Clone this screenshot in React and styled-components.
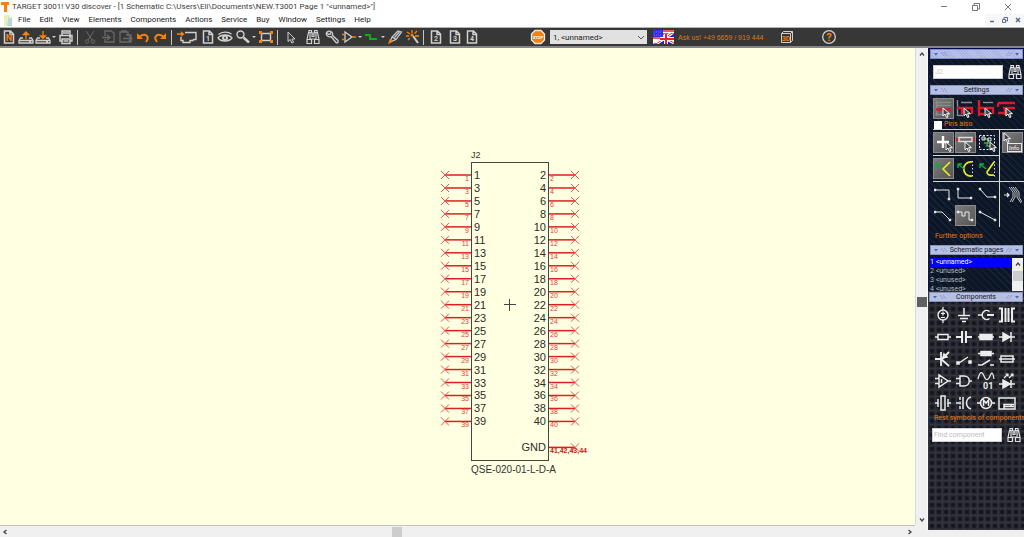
import { useState } from "react";
import styled, { createGlobalStyle } from "styled-components";

const GlobalStyle = createGlobalStyle`
  * {
    box-sizing: border-box;
  }

  body {
    margin: 0;
    background: #f0f0f0;
    font-family: Roboto, "Open Sans", "Liberation Sans", sans-serif;
  }

  button {
    padding: 0;
    border: 0;
    background: none;
    font-family: inherit;
  }
`;

const Window = styled.div`
  display: flex;
  flex-direction: column;
  height: 100vh;
  overflow: hidden;
`;

/* title bar and menu */

const TitleBar = styled.header`
  display: flex;
  align-items: center;
  height: 13px;
  padding-left: 1px;
  background: #fff;
`;

const Title = styled.h1`
  flex: 1;
  margin: 0 0 0 3px;
  color: #3c3c3c;
  font-size: 8px;
  font-weight: 400;
  line-height: 12px;
  white-space: nowrap;
`;

const WindowButtons = styled.div`
  display: flex;
`;

const WindowButton = styled.button`
  display: grid;
  place-items: center;
  width: ${({ $small }) => ($small ? "13px" : "32px")};
  height: ${({ $small }) => ($small ? "12px" : "13px")};
  background: ${({ $small }) => ($small ? "#f6f6f6" : "#fff")};
  color: ${({ $small }) => ($small ? "#5c6f88" : "#777")};
`;

const MenuBar = styled.nav`
  display: flex;
  align-items: center;
  height: 14px;
  padding-left: 4px;
  background: #fff;
`;

const Menus = styled.div`
  display: flex;
  flex: 1;
  gap: 9px;
  margin-left: 6px;
`;

const MenuButton = styled.button`
  color: #222;
  font-size: 8px;
  line-height: 14px;
`;

/* toolbar */

const Toolbar = styled.div`
  display: flex;
  align-items: center;
  height: 21px;
  flex: none;
  border-top: 1px solid #b4b4b4;
  border-bottom: 2px solid #85858a;
  background: #373737;
`;

const Tool = styled.button`
  display: grid;
  place-items: center;
  flex: none;
  width: ${({ $w = 17 }) => $w}px;
  height: 18px;
  color: ${({ $off }) => ($off ? "#6a6a6a" : "#d0d0d0")};
`;

const Divider = styled.span`
  flex: none;
  width: 1px;
  height: 15px;
  margin: 0 2px;
  background: #c4c4c4;
`;

const Info = styled.div`
  display: flex;
  align-items: center;
  margin-left: 49px;
`;

const PageSelect = styled.label`
  display: flex;
  align-items: center;
  width: 97px;
  height: 14px;
  margin: 0 6px 0 3px;
  background: #e1e1e1;

  select {
    width: 100%;
    height: 14px;
    padding: 0 3px;
    border: 0;
    appearance: none;
    background: transparent;
    color: #222;
    font-family: inherit;
    font-size: 8px;
  }

  svg {
    flex: none;
    margin-right: 3px;
  }
`;

const Hotline = styled.a`
  margin: 0 15px 0 4px;
  color: #d8781c;
  font-family: "Liberation Sans", Arial, sans-serif;
  font-size: 7px;
  text-decoration: none;
  white-space: nowrap;
`;

/* work area */

const Main = styled.main`
  display: flex;
  flex: 1;
  min-height: 0;
`;

const Editor = styled.section`
  display: grid;
  grid-template-columns: 1fr 12px;
  grid-template-rows: 1fr 12px;
  flex: 1;
  min-width: 0;
`;

const Sheet = styled.svg`
  width: 100%;
  height: 100%;
  background: #ffffe1;
  font-family: "Liberation Sans", Arial, sans-serif;
`;

const ScrollBar = styled.div`
  display: flex;
  flex-direction: ${({ $vertical }) => ($vertical ? "column" : "row")};
  align-items: center;
  justify-content: space-between;
  padding: ${({ $vertical }) => ($vertical ? "3px 0 2px" : "0 2px")};
  border-left: ${({ $vertical }) => ($vertical ? "1px solid #d8d8d8" : "0")};
  border-top: ${({ $vertical }) => ($vertical ? "0" : "1px solid #c4c4bc")};
  background: #f0f0f0;
  color: #444;

  button {
    display: grid;
    place-items: center;
    color: inherit;
  }
`;

const Track = styled.div`
  display: flex;
  flex: 1;
  flex-direction: ${({ $vertical }) => ($vertical ? "column" : "row")};
`;

const Thumb = styled.div`
  width: 10px;
  height: 10px;
  background: ${({ $dark }) => ($dark ? "#606060" : "#cdcdcd")};
`;

const Spacer = styled.span`
  flex: ${({ $grow }) => $grow};
`;

/* side panel */

const Side = styled.aside`
  display: flex;
  flex-direction: column;
  flex: none;
  width: 97px;
  margin-bottom: 7px;
  border-left: 1px solid #fafafa;
  background: #24252d;
`;

const Upper = styled.div`
  border-top: 1px solid #06064c;
  border-left: 1px solid #10104a;
  background: repeating-linear-gradient(
    45deg,
    #0c1524 0 2px,
    #182436 2px 3px,
    #0e1828 3px 5px
  );
`;

const Lower = styled.div`
  flex: 1;
  padding-top: 1px;
  overflow: hidden;
  background-color: #2a2b33;
  background-image:
    linear-gradient(#33343c 1px, transparent 1px),
    linear-gradient(90deg, #31323a 1px, transparent 1px),
    radial-gradient(circle at 4px 4px, #13141c 1px, transparent 3px);
  background-size: 7px 7px;
`;

const PanelTitle = styled.h2`
  display: flex;
  align-items: center;
  justify-content: space-between;
  height: 10px;
  margin: 0 1px;
  padding: 0 3px;
  border: 1px solid ${({ $active }) => ($active ? "#7f8fd0" : "#8994bb")};
  background: ${({ $active }) =>
    $active
      ? "repeating-linear-gradient(45deg, #a8b4e2 0 1px, #b9c3ea 1px 2px)"
      : "#b6c0e2"};
  color: #16161c;
  font-size: 7px;
  font-weight: 400;
  line-height: 8px;
  white-space: nowrap;
`;

const SearchRow = styled.div`
  display: flex;
  align-items: center;
  gap: 5px;
  padding: 5px 4px;

  input {
    width: 70px;
    height: 14px;
    padding: 0 1px;
    border: 1px solid #ccd;
    border-radius: 0;
    background: #fff;
    color: #c8c8c8;
    font-family: inherit;
    font-size: 7px;
  }

  input::placeholder {
    color: #bdbdbd;
  }

  button {
    display: grid;
    color: #e0e0e0;
  }
`;

const ModeRow = styled.div`
  display: flex;
  padding: 3px 4px 1px;
`;

const Cell = styled.button`
  display: grid;
  place-items: center;
  width: 21px;
  height: 21px;
  border: 1px solid ${({ $on }) => ($on ? "#8b8b8b" : "transparent")};
  background: ${({ $on }) =>
    $on ? "linear-gradient(135deg, #7c7c7c, #555)" : "none"};
  color: #e8e8e8;
`;

const PinsLabel = styled.label`
  display: flex;
  align-items: center;
  gap: 2px;
  height: 9px;
  padding-left: 5px;
  color: #e87a14;
  font-size: 7px;
  line-height: 9px;

  input {
    width: 8px;
    height: 8px;
    margin: 0;
    appearance: none;
    background: #fff;
  }

  input:checked {
    background: #e87a14;
  }
`;

const Options = styled.div`
  display: grid;
  grid-template-columns: 67px 1fr;
  margin-left: 4px;
  border-top: 1px solid #d8d8d8;
`;

const OptionGroup = styled.div`
  display: grid;
  grid-template-columns: repeat(${({ $cols = 3 }) => $cols}, 22px);
  align-content: start;
  height: ${({ $h }) => $h}px;
  padding: ${({ $pad = "2px 0" }) => $pad};
  border-right: ${({ $line }) => ($line ? "1px solid #d8d8d8" : "0")};
  border-bottom: ${({ $rule }) => ($rule ? "1px solid #d8d8d8" : "0")};
`;

const LinkButton = styled.button`
  display: block;
  height: ${({ $h }) => $h}px;
  margin-left: 6px;
  color: #e87a14;
  font-size: 7px;
  line-height: ${({ $h }) => $h}px;
  white-space: nowrap;
`;

const PageList = styled.div`
  display: flex;
  height: 34px;
  margin: 2px 1px 0;
  padding-top: 1px;
  overflow: hidden;
`;

const Pages = styled.div`
  flex: 1;
  overflow: hidden;
`;

const PageItem = styled.button`
  display: block;
  width: 100%;
  height: 9px;
  background: ${({ $on }) => ($on ? "#0000ff" : "none")};
  color: ${({ $on }) => ($on ? "#fff" : "#b0b8c0")};
  font-size: 7px;
  line-height: 9px;
  text-align: left;
`;

const PageScroll = styled.div`
  display: flex;
  flex-direction: column;
  align-items: center;
  gap: 4px;
  width: 11px;
  padding-top: 3px;
  background: #f0f0f0;
  color: #444;
`;

const Symbols = styled.div`
  display: grid;
  grid-template-columns: repeat(4, 1fr);
  padding: 2px 6px 0 4px;
`;

const SymbolButton = styled.button`
  display: grid;
  place-items: center;
  height: 22px;
  color: #ececec;
`;

function Icon({ w = 16, h = 16, children, sw = 1 }) {
  return (
    <svg
      width={w}
      height={h}
      viewBox={`0 0 ${w} ${h}`}
      fill="none"
      stroke="currentColor"
      strokeWidth={sw}
      aria-hidden="true"
    >
      {children}
    </svg>
  );
}

const ORANGE = "#f5820f";
const RED = "#e01828";

const Chevron = ({ turn = 0 }) => (
  <Icon w={6} h={6} sw={1.3}>
    <path d="M1 4.500 3 2l2 2.500" transform={`rotate(${turn} 3 3)`} />
  </Icon>
);

const Binoculars = () => (
  <Icon w={14} h={16} sw={1.2}>
    <path d="M3 3V1.500h2.500V3M8.500 3V1.500H11V3M2.500 3.500h3.500v4H8v-4h3.500l1.500 7v4H8.500v-4.500h-3V14.500H1v-4zM1 10.500h4.500M8.500 10.500H13M6 5h2M4 4v6M10 4v6" />
  </Icon>
);

const PageIcon = ({ n }) => (
  <Icon sw={1.5}>
    <path d="M3.500 2h6l3 3v9h-9zM9 2v3.500h3.500" />
    <text
      x="8"
      y="12"
      fill={n === "N" ? ORANGE : "currentColor"}
      stroke="none"
      fontSize={n === "N" ? 9 : 7}
      fontWeight="700"
      textAnchor="middle"
    >
      {n}
    </text>
  </Icon>
);

const Pointer = ({ x = 0, y = 0 }) => (
  <path
    d="M0 0v8l2-2 1.500 3.500L5 9 3.600 5.700H6.500z"
    transform={`translate(${x} ${y})`}
    fill="#444"
    stroke="#f4f4f4"
    strokeWidth="1"
  />
);

const Caret = () => (
  <Icon w={4} h={4}>
    <path d="M0 1h4L2 3z" fill="currentColor" stroke="none" />
  </Icon>
);

const fileTools = [
  { label: "New", icon: <PageIcon n="N" /> },
  {
    label: "Open",
    icon: (
      <Icon sw={1.3}>
        <path d="M5 9H2.500L1 11.500v2.500h14v-2.500L13.500 9H11M1 11.500h14M11 13h2" />
        <path d="M8 10V4M5.500 5.500 8 3l2.500 2.500z" stroke={ORANGE} fill={ORANGE} />
      </Icon>
    ),
  },
  {
    label: "Save",
    icon: (
      <Icon sw={1.3}>
        <path d="M5 9H2.500L1 11.500v2.500h14v-2.500L13.500 9H11M1 11.500h14M11 13h2" />
        <path d="M8 2v6M5.500 7h5L8 9.500z" stroke={ORANGE} fill={ORANGE} />
      </Icon>
    ),
  },
  { label: "Save options", w: 6, icon: <Caret /> },
  {
    label: "Print",
    w: 18,
    icon: (
      <Icon sw={1.5}>
        <path d="M4 6V2h8v4M4 12H2V6.500h12V12h-2M4 10h8v4.500H4zM5.500 12h5M11 8h2M5 4h6" />
      </Icon>
    ),
  },
];

const editTools = [
  {
    label: "Cut",
    w: 20,
    off: true,
    icon: (
      <Icon>
        <path d="m4 2 6 9M12 2 6 11" />
        <circle cx="5" cy="12.500" r="1.700" />
        <circle cx="11" cy="12.500" r="1.700" />
      </Icon>
    ),
  },
  {
    label: "Copy",
    off: true,
    icon: (
      <Icon sw={1.3}>
        <path d="M4 7V2h6l3 2v9H4v-3M1 8.500h7M6 6l3 2.500L6 11" />
      </Icon>
    ),
  },
  {
    label: "Paste",
    off: true,
    icon: (
      <Icon sw={1.3}>
        <path d="M9 13H2V3h8v3M4 3V2h4v1M5 9.500h8M11 7l3 2.500-3 2.500M5 13h8V6H8" />
      </Icon>
    ),
  },
  {
    label: "Undo",
    icon: (
      <Icon sw={2}>
        <path d="M4 8c7-5 11 0 7 5" stroke={ORANGE} />
        <path d="M2 4v6h6z" fill={ORANGE} stroke="none" />
      </Icon>
    ),
  },
  {
    label: "Redo",
    w: 18,
    icon: (
      <Icon sw={2}>
        <path d="M12 8C5 3 1 8 5 13" stroke={ORANGE} />
        <path d="M14 4v6H8z" fill={ORANGE} stroke="none" />
      </Icon>
    ),
  },
];

const viewTools = [
  {
    label: "Import part",
    w: 25,
    icon: (
      <Icon w={20} sw={1.4}>
        <path d="M8 3.500h11v7h-3M4 8v3.500h2v2h7v-2h3v-1" />
        <path d="M0 5h6M4.500 3.500 6.500 5l-2 1.500z" stroke={ORANGE} fill={ORANGE} />
      </Icon>
    ),
  },
  { label: "Page", icon: <PageIcon n="1" /> },
  {
    label: "View",
    w: 18,
    icon: (
      <Icon sw={1.3}>
        <path d="M1.500 5.500C5 2.500 11 2.500 14.500 5M1 9c3-4 11-4 14 0-3 4-11 4-14 0z" />
        <circle cx="8" cy="8.800" r="2.300" fill="currentColor" />
        <circle cx="8" cy="8.800" r="1" fill="#373737" stroke="none" />
      </Icon>
    ),
  },
  {
    label: "Zoom",
    icon: (
      <Icon sw={1.4}>
        <circle cx="5.500" cy="5.500" r="3.500" />
        <path d="m8.500 8.500 5.500 5" strokeWidth="2.400" />
      </Icon>
    ),
  },
  { label: "Zoom options", w: 6, icon: <Caret /> },
  {
    label: "Fit",
    w: 18,
    icon: (
      <Icon sw={1.4}>
        <path d="M3.500 4.500h9v7h-9z" />
        <path
          d="M1 2h3v3H1zM12 2h3v3h-3zM1 11h3v3H1zM12 11h3v3h-3z"
          fill={ORANGE}
          stroke="none"
        />
      </Icon>
    ),
  },
];

const drawTools = [
  {
    label: "Select",
    w: 22,
    icon: (
      <Icon>
        <path d="M5 3v9.500l2.300-2 1.500 3.500 1.700-.7L9 10h3z" />
      </Icon>
    ),
  },
  { label: "Find", w: 21, icon: <Binoculars /> },
  {
    label: "Properties",
    icon: (
      <Icon sw={1.3}>
        <path d="M7 2.500C4 1 1 4 3 6.500c1 1.500 3 1.500 4 1l5 6c1 1 3-.5 2-2L8.500 6.500C9 5 8.500 3 7 2.500L6.500 5 4.500 5.500 3.500 4" />
      </Icon>
    ),
  },
  {
    label: "Gate",
    icon: (
      <Icon sw={1.3}>
        <path d="M4 3v10l7-5z" />
        <path d="M1 5.500h3M1 10.500h3M11 8h4" stroke={ORANGE} />
      </Icon>
    ),
  },
  { label: "Gate options", w: 5, icon: <Caret /> },
  {
    label: "Wire",
    w: 18,
    icon: (
      <Icon sw={1.8}>
        <path d="M2 6h5v4h7" stroke="#10b010" />
      </Icon>
    ),
  },
  { label: "Wire options", w: 6, icon: <Caret /> },
  {
    label: "Draw",
    w: 18,
    icon: (
      <Icon sw={1.2}>
        <path d="m3 13 2-5 6-6 3.500 1L9 10.500zM5 8l4 2.500M7.500 8.500l5-5.500" />
        <path d="m2 14 1-3 2 1.500z" fill={ORANGE} stroke={ORANGE} />
      </Icon>
    ),
  },
  {
    label: "Wizard",
    icon: (
      <Icon>
        <path d="m8 7 5 7" strokeWidth="2" />
        <path
          d="M7 1v3M2 3l3 2M12 2 9.500 4.500M1 7h3M10 7h4M3 11l2-2"
          stroke={ORANGE}
          strokeWidth="1.300"
        />
        <circle cx="7" cy="6" r="1.500" fill={ORANGE} stroke="none" />
      </Icon>
    ),
  },
];

const pageTools = [
  { label: "Page 2", w: 20, icon: <PageIcon n="2" /> },
  { label: "Page 3", icon: <PageIcon n="3" /> },
  { label: "Page 4", icon: <PageIcon n="4" /> },
];

const toolGroups = [fileTools, editTools, viewTools, drawTools, pageTools];

const menus = [
  "File",
  "Edit",
  "View",
  "Elements",
  "Components",
  "Actions",
  "Service",
  "Buy",
  "Window",
  "Settings",
  "Help",
];

const Flag = () => (
  <svg width="21" height="14" viewBox="0 0 21 14" aria-hidden="true">
    <rect width="21" height="14" fill="#fff" />
    <path d="M10 1h11M10 4h11M0 8h9" stroke="#e82030" strokeWidth="1.500" />
    <rect width="10" height="7" fill="#3030f0" />
    <path d="M1 2h8M1 5h8" stroke="#6f6ff8" strokeDasharray="1 1" />
    <path d="M21 4v10H0z" fill="#2020d8" />
    <path d="M19 3 3 14M10 7l11 6" stroke="#fff" strokeWidth="3" />
    <path d="M19 3 3 14M10 7l11 6" stroke="#e82030" />
    <path d="M13 4v10M7 9h14" stroke="#fff" strokeWidth="4" />
    <path d="M13 4v10M7 9h14" stroke="#e82030" strokeWidth="2" />
  </svg>
);

const Deco = ({ flip }) => (
  <svg width="13" height="6" viewBox="0 0 13 6" aria-hidden="true">
    <g transform={flip ? "translate(13 0) scale(-1 1)" : undefined}>
      <path d="M0 2h4L2 4.500z" fill="#4c62bc" />
      <path d="M7 1l3 4M10 1l3 4" stroke="#8e9bcb" />
    </g>
  </svg>
);

const moveModes = [
  {
    label: "Move with stretch",
    on: true,
    grey: "M3 3.500h14M3 6.500h14M2.500 2v15M3 15.500h13",
    red: "M2 10.500h15",
  },
  {
    label: "Move at right angle",
    grey: "M2.500 1v16M6 3.500h11M3 16.500h5",
    red: "M2 9h15v6M7 9v6",
  },
  { label: "Move bus", grey: "M7 3.500h10", red: "M3 1v16M3 9h14v6M3 15h5" },
  { label: "Move all", grey: "", red: "M1 4h17M6 9h12M8 9v7M1 14h6M1 4v4" },
];

const MoveIcon = ({ grey, red }) => (
  <Icon w={19} h={19}>
    <path d={grey} stroke="#8c8c90" strokeWidth="1.400" />
    <path d={red} stroke={RED} strokeWidth="2.400" />
    <Pointer x={9} y={9} />
  </Icon>
);

const handleTools = [
  {
    label: "Add",
    on: true,
    icon: (
      <Icon w={19} h={19}>
        <path d="M9 3v12M3 9h12" stroke="#fff" strokeWidth="2.400" />
        <Pointer x={12} y={9} />
      </Icon>
    ),
  },
  {
    label: "Resize",
    on: true,
    icon: (
      <Icon w={19} h={19}>
        <path d="M3 4.500h13v4H3z" stroke="#ddd" strokeWidth="1.400" />
        <path d="M1 5v3M18 5v3" stroke={RED} strokeWidth="2" />
        <Pointer x={9} y={9} />
      </Icon>
    ),
  },
  {
    label: "Select area",
    icon: (
      <Icon w={19} h={19}>
        <path d="M1.500 2.500h15v14h-15z" strokeDasharray="2 1.500" />
        <path d="M5 6h5v5M6 10h3v3h4" stroke="#49a34f" strokeWidth="1.400" />
        <path d="M4 4h3v3H4zM10 5h3v3h-3z" />
        <Pointer x={12} y={9} />
      </Icon>
    ),
  },
];

const curveTools = ["m16 3-7 7 7 7", "M16 3C5 2 5 18 16 17", "M16 3 9 13q0 4 7 3"];

const wireTools = [
  { label: "Right then down", d: "M1 5h14v9", dots: [[1, 5], [15, 14]] },
  { label: "Down then right", d: "M2 4v9h13", dots: [[2, 4], [15, 13]] },
  { label: "Diagonal then right", d: "M2 4l7 8h8", dots: [[2, 4], [17, 12]] },
  { label: "Right then diagonal", d: "M1 6h7l8 8", dots: [[1, 6], [16, 14]] },
  {
    label: "Meander",
    on: true,
    d: "M2 6h4v4h3V6h4v8h3",
    dots: [[2, 6], [16, 14]],
  },
  { label: "Straight", d: "M2 6l15 8", dots: [[2, 6], [17, 14]] },
];

const symbols = [
  ["Source", <><circle cx="9" cy="9" r="5" /><path d="M9 1v3M9 14v3M7 7.500h4M9 5.500v4M7 11.500h4" strokeWidth="1.200" /></>],
  ["Ground", <path d="M9 2v7M3 9.500h12M5 12.500h8M7 15.500h4" />],
  ["Connector", <><path d="M1 9h5M12.500 5.500a4.500 4.500 0 1 0 0 7" /><path d="M10 9h7" strokeWidth="2" /></>],
  ["Transformer", <path d="M1 2.500h3v13H1M17 2.500h-3v13h3M7.500 2v14M10.500 2v14" strokeWidth="2" />],
  ["Resistor", <path d="M1 9h3M14 9h3M4 6.500h10v5H4z" />],
  ["Capacitor", <path d="M1 9h6M11 9h6M7 3v12M11 3v12" strokeWidth="2" />],
  ["Filled resistor", <path d="M1 9h3M14 9h3M3 6.500h12v5H3z" fill="currentColor" />],
  ["Diode", <path d="M1 9h16M5 5v8l7-4zM13 4v10" fill="currentColor" />],
  ["Transistor", <><path d="M1 9h6M7 2v14M7 9l8 7M7 10l8-8" strokeWidth="1.800" /><path d="M9 8l1-4 3 3z" fill="currentColor" /></>],
  ["Switch", <><path d="M4 13l9-6" /><path d="M2 12h2v2H2zM14 11h2v2h-2z" fill="currentColor" /></>],
  ["Relay", <><path d="M4 1.500h10v4H4z" fill="currentColor" /><path d="M1 3.500h3M14 3.500h3M1 15h4l8-5M13 15h4" /></>],
  ["Fuse", <path d="M1 9h16M3 6h12v6H3z" />],
  ["Amplifier", <path d="M5 3v12l9-6zM1 6.500h4M1 11.500h4M14 9h3M7.500 7v4" />],
  ["Gate", <path d="M5 4h4c7 0 7 10 0 10H5zM1 6.500h4M1 11.500h4M14 9h3" />],
  ["Simulation", <><path d="M1 7C3-1 5-1 7 4s4 5 6 0 3-3 4 3" strokeWidth="1.200" /><text x="6" y="17" fill="currentColor" stroke="none" fontSize="9" fontWeight="700">01</text></>],
  ["LED", <><path d="M1 12h16M5 8v8l7-4zM13 8v8" fill="currentColor" /><path d="M6 6l4-4M7.500 2H10v2.500M11 6l4-4M12.500 2H15v2.500" strokeWidth="1.200" /></>],
  ["Crystal", <path d="M1 9h3M14 9h3M7 2h4v14H7zM4 5v8M14 5v8" strokeWidth="1.500" />],
  ["Coupler", <path d="M1 9h3M5 3v3M5 7.500v3M5 12v3M8 3v12M16 3c-6 2-6 10 0 12" />],
  ["Motor", <><circle cx="9" cy="9" r="5.500" /><path d="M0 9h3M15 9h3M6.500 12V6L9 9l2.500-3v6" /></>],
  ["Frame", <path d="M1 4h16v11H1zM6 12.500h10M6 15v-4.500h10M13 10v3" strokeWidth="1.500" />],
];

const ROW = 12.97;

function Pin({ y, left, n }) {
  const tip = left ? 445 : 575;
  const edge = left ? 471 : 549;
  const ground = n === "GND";
  return (
    <g>
      <path d={`M${tip} ${y}H${edge}`} stroke="#dc2020" strokeWidth="1.500" />
      <path
        d={`M${tip - 4} ${y - 4}l8 8M${tip - 4} ${y + 4}l8-8`}
        stroke="#e85050"
      />
      <text
        x={left ? 469 : 550}
        y={y + 6}
        textAnchor={left ? "end" : "start"}
        fontSize="7"
        fontWeight={ground ? 700 : 400}
        fill={ground ? "#d01818" : "#e34040"}
      >
        {ground ? "41,42,43,44" : n}
      </text>
      <text
        x={left ? 474 : 546}
        y={y + 4}
        textAnchor={left ? "start" : "end"}
        fontSize="11"
        fill="#2c2c2c"
      >
        {n}
      </text>
    </g>
  );
}

function Schematic() {
  const rows = Array.from({ length: 20 }, (_, i) => i);
  return (
    <Sheet role="img" aria-label="Connector J2">
      <text x="471" y="110" fontSize="9" fill="#333">
        J2
      </text>
      <rect x="471.500" y="114.500" width="77" height="298" fill="none" stroke="#444" />
      {rows.map((i) => (
        <Pin key={i} left y={127 + i * ROW} n={i * 2 + 1} />
      ))}
      {rows.map((i) => (
        <Pin key={i} y={127 + i * ROW} n={i * 2 + 2} />
      ))}
      <Pin y={127 + 21 * ROW} n="GND" />
      <path d="M504 256.500h12M509.500 251v12" stroke="#444" />
      <text x="471" y="425" fontSize="10" fill="#333">
        QSE-020-01-L-D-A
      </text>
    </Sheet>
  );
}

function PanelHeader({ children, active }) {
  return (
    <PanelTitle $active={active}>
      <Deco />
      {children}
      <Deco flip />
    </PanelTitle>
  );
}

function SidePanel() {
  const [page, setPage] = useState(1);
  return (
    <Side>
      <Upper>
        <PanelHeader active />
        <SearchRow>
          <input aria-label="Name" defaultValue="J2" />
          <button aria-label="Search name">
            <Binoculars />
          </button>
        </SearchRow>
        <PanelHeader>Settings</PanelHeader>
        <ModeRow>
          {moveModes.map((m) => (
            <Cell key={m.label} aria-label={m.label} $on={m.on}>
              <MoveIcon grey={m.grey} red={m.red} />
            </Cell>
          ))}
        </ModeRow>
        <PinsLabel>
          <input type="checkbox" />
          Pins also
        </PinsLabel>
        <Options>
          <OptionGroup $h={26} $line $rule>
            {handleTools.map((t) => (
              <Cell key={t.label} aria-label={t.label} $on={t.on}>
                {t.icon}
              </Cell>
            ))}
          </OptionGroup>
          <OptionGroup $h={26} $cols={1} $pad="2px">
            <Cell aria-label="Info" $on>
              <Icon w={19} h={19}>
                <rect x="4.500" y="10.500" width="14" height="8" />
                <text x="6" y="17" fontSize="6" fill="#fff" stroke="none">
                  Info
                </text>
                <Pointer x={1} y={0} />
              </Icon>
            </Cell>
          </OptionGroup>
          <OptionGroup $h={26} $line $rule>
            {curveTools.map((d, i) => (
              <Cell key={d} aria-label={`Curve ${i + 1}`} $on={i === 0}>
                <Icon w={19} h={19}>
                  {i > 0 && <path d="M16.500 2v16" stroke="#ddd" strokeDasharray="1.500 2" />}
                  <path d={d} stroke="#ece81c" strokeWidth="1.700" />
                  <path d="m2 5 6 5M2 9V5h4" stroke="#18a838" strokeWidth="1.400" />
                </Icon>
              </Cell>
            ))}
          </OptionGroup>
          <OptionGroup $h={26} $cols={1} $rule />
          <OptionGroup $h={45} $line>
            {wireTools.map((t) => (
              <Cell key={t.label} aria-label={t.label} $on={t.on}>
                <Icon w={19} h={19}>
                  <path d={t.d} />
                  {t.dots.map(([x, y]) => (
                    <circle key={x} cx={x} cy={y} r="1" fill="#fff" />
                  ))}
                </Icon>
              </Cell>
            ))}
          </OptionGroup>
          <OptionGroup $h={45} $cols={1} $pad="2px">
            <Cell aria-label="Bundle">
              <Icon w={19} h={19} sw={0.8}>
                <path d="M1 10h5M4 8l2 2-2 2" strokeWidth="1.200" />
                <path d="M6 2l4 5v5l-3 5M8 2l4 5v5l-3 5M10 2l4 5v5l4 6M12 2l4 5v5l3 5" />
              </Icon>
            </Cell>
          </OptionGroup>
        </Options>
        <LinkButton $h={18}>Further options</LinkButton>
        <PanelHeader>Schematic pages</PanelHeader>
        <PageList>
          <Pages>
            {[1, 2, 3, 4].map((n) => (
              <PageItem key={n} $on={n === page} onClick={() => setPage(n)}>
                {n} {n === 1 ? "<unnamed>" : "<unused>"}
              </PageItem>
            ))}
          </Pages>
          <PageScroll>
            <Chevron />
            <Thumb />
          </PageScroll>
        </PageList>
      </Upper>
      <Lower>
        <PanelHeader>Components</PanelHeader>
        <Symbols>
          {symbols.map(([label, art]) => (
            <SymbolButton key={label} aria-label={label}>
              <Icon w={18} h={18} sw={1.5}>
                {art}
              </Icon>
            </SymbolButton>
          ))}
        </Symbols>
        <LinkButton $h={8}>Rest symbols of components</LinkButton>
        <SearchRow>
          <input aria-label="Find component" placeholder="Find component" />
          <button aria-label="Find">
            <Binoculars />
          </button>
        </SearchRow>
      </Lower>
    </Side>
  );
}

export default function App() {
  return (
    <Window>
      <GlobalStyle />
      <TitleBar>
        <Icon w={8} h={12}>
          <path d="M0 1h8v3H6v7H3V4H0z" fill={ORANGE} stroke="none" />
        </Icon>
        <Title>
          TARGET 3001! V30 discover - [1 Schematic
          C:\Users\Eli\Documents\NEW.T3001 Page 1 "&lt;unnamed&gt;"]
        </Title>
        <WindowButtons>
          <WindowButton aria-label="Minimize">
            <Icon w={8} h={8}><path d="M1 3.500h6" /></Icon>
          </WindowButton>
          <WindowButton aria-label="Restore">
            <Icon w={8} h={8}><path d="M.5 2.500h5v5h-5zM2 2.500v-2h5.500v5.500h-2" /></Icon>
          </WindowButton>
          <WindowButton aria-label="Close">
            <Icon w={8} h={8}><path d="m1 1 6 6M7 1 1 7" /></Icon>
          </WindowButton>
        </WindowButtons>
      </TitleBar>
      <MenuBar>
        <Icon w={8} h={12}>
          <path d="M0 1h5l3 3v8H0z" fill="#e8f0c0" stroke="none" />
          <path d="M5 1v3h3v8H3z" fill="#b8d8d8" stroke="none" />
        </Icon>
        <Menus>
          {menus.map((m) => (
            <MenuButton key={m}>{m}</MenuButton>
          ))}
        </Menus>
        <WindowButtons>
          <WindowButton $small aria-label="Minimize page">
            <Icon w={6} h={6} sw={1.5}><path d="M1 4.500h4" /></Icon>
          </WindowButton>
          <WindowButton $small aria-label="Restore page">
            <Icon w={6} h={6}><path d="M.5 2.500h3v3h-3zM2 2V.5h3.500V4H4" /></Icon>
          </WindowButton>
          <WindowButton $small aria-label="Close page">
            <Icon w={6} h={6} sw={1.5}><path d="m1 1 4 4M5 1 1 5" /></Icon>
          </WindowButton>
        </WindowButtons>
      </MenuBar>
      <Toolbar>
        {toolGroups.map((group, i) => [
          i > 0 && <Divider key={i} />,
          ...group.map((t) => (
            <Tool key={t.label} aria-label={t.label} $w={t.w} $off={t.off}>
              {t.icon}
            </Tool>
          )),
        ])}
        <Info>
          <Tool $w={18} aria-label="Stop">
            <Icon>
              <path d="M5 1.500h6L14.500 5v6L11 14.500H5L1.500 11V5z" fill={ORANGE} stroke="#f4e8dc" strokeWidth="1.300" />
              <text x="8" y="10" fill="#fff" stroke="none" fontSize="4" fontWeight="700" textAnchor="middle">
                STOP
              </text>
            </Icon>
          </Tool>
          <PageSelect>
            <select aria-label="Page">
              <option>1, &lt;unnamed&gt;</option>
            </select>
            <Icon w={6} h={6}><path d="m0 2 3 3 3-3" stroke="#555" /></Icon>
          </PageSelect>
          <Tool $w={21} aria-label="Language">
            <Flag />
          </Tool>
          <Hotline href="tel:+496659919444">Ask us! +49 6659 / 919 444</Hotline>
          <Tool $w={18} aria-label="3D view">
            <Icon>
              <path d="M2.500 4.500h9v9h-9zM2.500 4.500l2-2h9l-2 2M13.500 2.500v9l-2 2" />
              <text x="7" y="12" fill={ORANGE} stroke="none" fontSize="7" fontWeight="700" textAnchor="middle">
                3D
              </text>
            </Icon>
          </Tool>
          <Tool $w={66} aria-label="Help">
            <Icon>
              <circle cx="8" cy="8" r="6.300" strokeWidth="1.300" />
              <text x="8" y="12" fill={ORANGE} stroke="none" fontSize="11" fontWeight="700" textAnchor="middle">
                ?
              </text>
            </Icon>
          </Tool>
        </Info>
      </Toolbar>
      <Main>
        <Editor>
          <Schematic />
          <ScrollBar $vertical>
            <button aria-label="Scroll up"><Chevron /></button>
            <Track $vertical>
              <Spacer $grow={237} />
              <Thumb $dark />
              <Spacer $grow={208} />
            </Track>
            <button aria-label="Scroll down"><Chevron turn={180} /></button>
          </ScrollBar>
          <ScrollBar>
            <button aria-label="Scroll left"><Chevron turn={270} /></button>
            <Track>
              <Spacer $grow={384} />
              <Thumb />
              <Spacer $grow={504} />
            </Track>
            <button aria-label="Scroll right"><Chevron turn={90} /></button>
          </ScrollBar>
        </Editor>
        <SidePanel />
      </Main>
    </Window>
  );
}
